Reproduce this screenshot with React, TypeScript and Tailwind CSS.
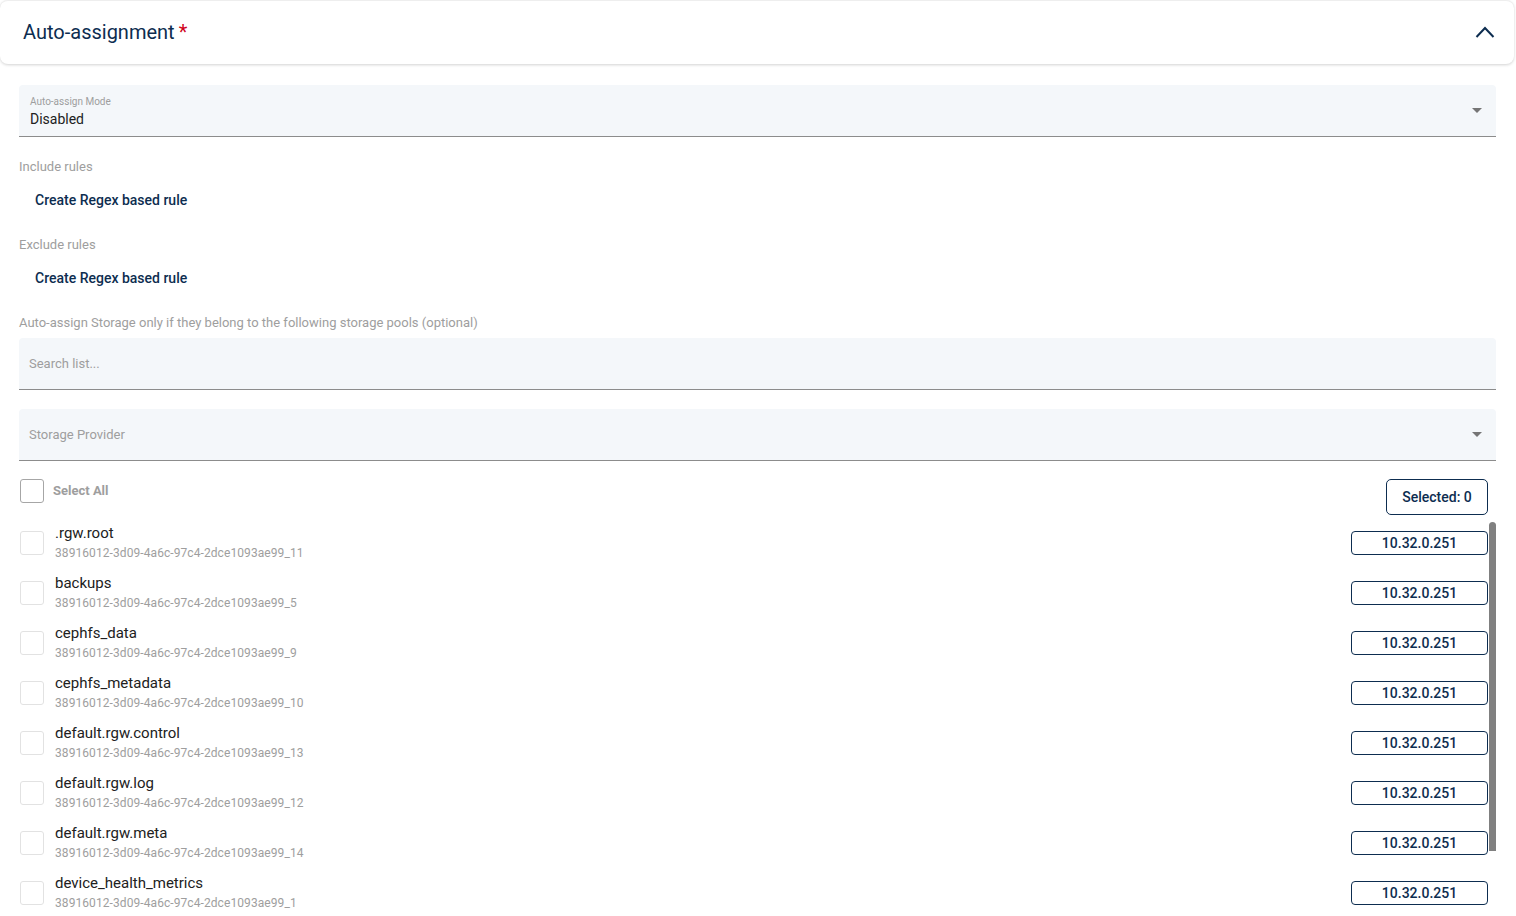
import React from 'react';

const pools = [
  { name: '.rgw.root', id: '38916012-3d09-4a6c-97c4-2dce1093ae99_11' },
  { name: 'backups', id: '38916012-3d09-4a6c-97c4-2dce1093ae99_5' },
  { name: 'cephfs_data', id: '38916012-3d09-4a6c-97c4-2dce1093ae99_9' },
  { name: 'cephfs_metadata', id: '38916012-3d09-4a6c-97c4-2dce1093ae99_10' },
  { name: 'default.rgw.control', id: '38916012-3d09-4a6c-97c4-2dce1093ae99_13' },
  { name: 'default.rgw.log', id: '38916012-3d09-4a6c-97c4-2dce1093ae99_12' },
  { name: 'default.rgw.meta', id: '38916012-3d09-4a6c-97c4-2dce1093ae99_14' },
  { name: 'device_health_metrics', id: '38916012-3d09-4a6c-97c4-2dce1093ae99_1' },
];

const Caret = () => (
  <svg width="10" height="5" viewBox="0 0 10 5" className="shrink-0">
    <path d="M0 0 L10 0 L5 5 Z" fill="#757575" />
  </svg>
);

const RuleButton = () => (
  <button className="h-[36px] px-[16px] text-left text-[14px] font-medium text-[#0d2d50]">
    Create Regex based rule
  </button>
);

const App: React.FC = () => {
  return (
    <div className="h-[916px] overflow-hidden bg-white font-['Roboto',sans-serif]">
      {/* Panel header */}
      <div className="mr-[2px] flex h-[64px] items-center justify-between rounded-lg border-t border-[#eeeeee] bg-white pb-[2px] pl-[23px] pr-[19px] shadow-[0_1px_3px_rgba(0,0,0,0.18)]">
        <div className="text-[20px] text-[#0d2d50]">
          Auto-assignment<span className="ml-[4px] text-[#d0021b]">*</span>
        </div>
        <svg width="20" height="14" viewBox="0 0 20 14">
          <path d="M1.5 12 L10 3 L18.5 12" fill="none" stroke="#0d2d50" strokeWidth="2" />
        </svg>
      </div>

      <div className="pl-[19px] pr-[20px] pt-[21px]">
        {/* Mode select */}
        <div className="flex h-[52px] items-center justify-between rounded-t-[4px] border-b border-[#8c8c8c] bg-[#f4f7fa] pl-[11px] pr-[14px]">
          <div className="flex flex-col pt-[2px]">
            <span className="text-[10px] leading-[12px] text-[#9e9e9e]">Auto-assign Mode</span>
            <span className="mt-[2px] text-[14px] leading-[18px] text-[#212121]">Disabled</span>
          </div>
          <Caret />
        </div>

        <div className="mt-[22px] text-[13px] leading-[16px] text-[#9e9e9e]">Include rules</div>
        <div className="mt-[7px]">
          <RuleButton />
        </div>

        <div className="mt-[19px] text-[13px] leading-[16px] text-[#9e9e9e]">Exclude rules</div>
        <div className="mt-[7px]">
          <RuleButton />
        </div>

        <div className="mt-[19px] text-[13px] leading-[16px] text-[#9e9e9e]">
          Auto-assign Storage only if they belong to the following storage pools (optional)
        </div>

        {/* Search */}
        <div className="mt-[7px] flex h-[52px] items-center rounded-t-[4px] border-b border-[#8c8c8c] bg-[#f4f7fa] px-[10px]">
          <input
            placeholder="Search list..."
            className="w-full bg-transparent text-[13px] text-[#212121] outline-none placeholder:text-[#9e9e9e]"
          />
        </div>

        {/* Provider */}
        <div className="mt-[19px] flex h-[52px] items-center justify-between rounded-t-[4px] border-b border-[#8c8c8c] bg-[#f4f7fa] pl-[10px] pr-[14px]">
          <span className="text-[13px] text-[#9e9e9e]">Storage Provider</span>
          <Caret />
        </div>

        {/* Select all */}
        <div className="mt-[18px] flex items-start justify-between pr-[8px]">
          <label className="ml-[1px] flex items-center gap-[9px]">
            <span className="h-[24px] w-[24px] rounded-[3px] border-[1.5px] border-[#a6a6a6]" />
            <span className="text-[13px] font-bold text-[#9e9e9e]">Select All</span>
          </label>
          <button className="flex h-[36px] w-[102px] items-center justify-center rounded-[5px] border border-[#0d2d50] text-[14px] font-medium text-[#0d2d50]">
            Selected: 0
          </button>
        </div>

        {/* Pool list */}
        <div className="relative mt-[3px]">
          <div className="pr-[8px]">
            {pools.map((p) => (
              <div key={p.id} className="flex h-[50px] items-center justify-between">
                <div className="ml-[1px] flex items-center gap-[11px]">
                  <span className="h-[24px] w-[24px] rounded-[3px] border-[1.5px] border-[#e2e2e2]" />
                  <div className="flex flex-col">
                    <span className="text-[15px] leading-[20px] text-[#212121]">{p.name}</span>
                    <span className="text-[12px] leading-[20px] tracking-[0.08px] text-[#9e9e9e]">{p.id}</span>
                  </div>
                </div>
                <span className="flex h-[24px] w-[137px] items-center justify-center rounded-[4px] border border-[#0d2d50] text-[14px] font-medium text-[#0d2d50]">
                  10.32.0.251
                </span>
              </div>
            ))}
          </div>
          {/* scrollbar thumb */}
          <div className="absolute right-0 top-[4px] h-[329px] w-[7px] rounded-t-[4px] bg-[#808080]" />
        </div>
      </div>
    </div>
  );
};

export default App;
